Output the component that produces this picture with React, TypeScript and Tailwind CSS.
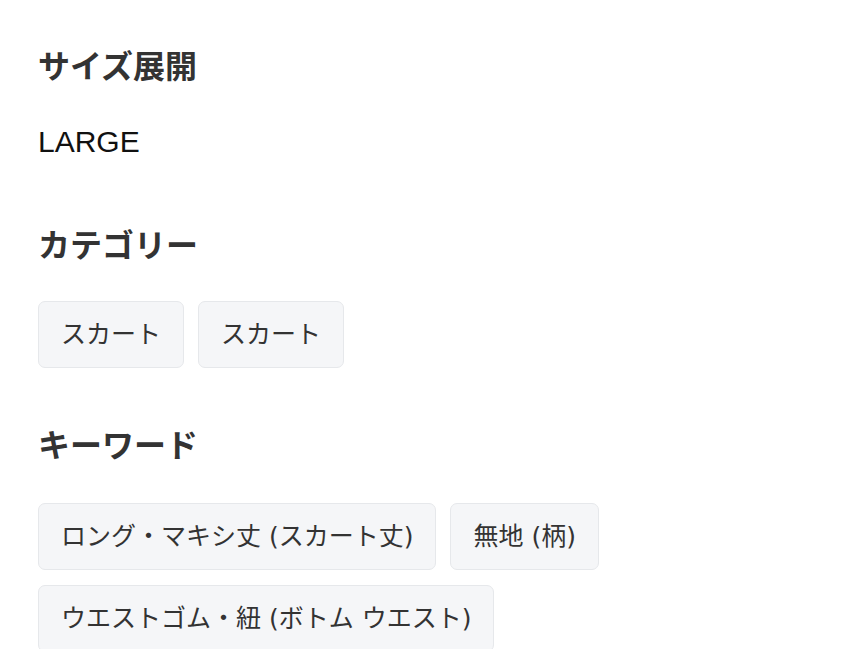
const sizes = ["LARGE"];
const categories = ["スカート", "スカート"];
const keywords = ["ロング・マキシ丈 (スカート丈)", "無地 (柄)", "ウエストゴム・紐 (ボトム ウエスト)"];

function Chip({ label }: { label: string }) {
  return (
    <span
      className="inline-flex h-[67px] items-center rounded-[7px] border border-[#e6e8eb] bg-[#f5f6f8] px-[22px] text-[25px] text-[#333]"
      style={{ fontFamily: '"DejaVu Sans", "Noto Sans CJK JP", sans-serif' }}
    >
      {label}
    </span>
  );
}

function Heading({ children }: { children: React.ReactNode }) {
  return (
    <h2 className="text-[32px] font-bold leading-[40px] text-[#333]">
      {children}
    </h2>
  );
}

export default function App() {
  return (
    <div
      className="min-h-screen bg-white px-[38px] pt-[44px]"
      style={{ fontFamily: '"Noto Sans CJK JP", "Noto Sans", sans-serif' }}
    >
      <section>
        <Heading>サイズ展開</Heading>
        <div className="mt-[38px] flex gap-4">
          {sizes.map((s) => (
            <span
              key={s}
              className="text-[30px] leading-[40px] text-[#111]"
              style={{ fontFamily: '"Liberation Sans", sans-serif' }}
            >
              {s}
            </span>
          ))}
        </div>
      </section>

      <section className="mt-[61px]">
        <Heading>カテゴリー</Heading>
        <div className="mt-[38px] flex flex-wrap gap-[14px]">
          {categories.map((c, i) => (
            <Chip key={i} label={c} />
          ))}
        </div>
      </section>

      <section className="mt-[55px]">
        <Heading>キーワード</Heading>
        <div className="mt-[40px] flex flex-wrap gap-x-[14px] gap-y-[15px]">
          {keywords.map((k) => (
            <Chip key={k} label={k} />
          ))}
        </div>
      </section>
    </div>
  );
}
